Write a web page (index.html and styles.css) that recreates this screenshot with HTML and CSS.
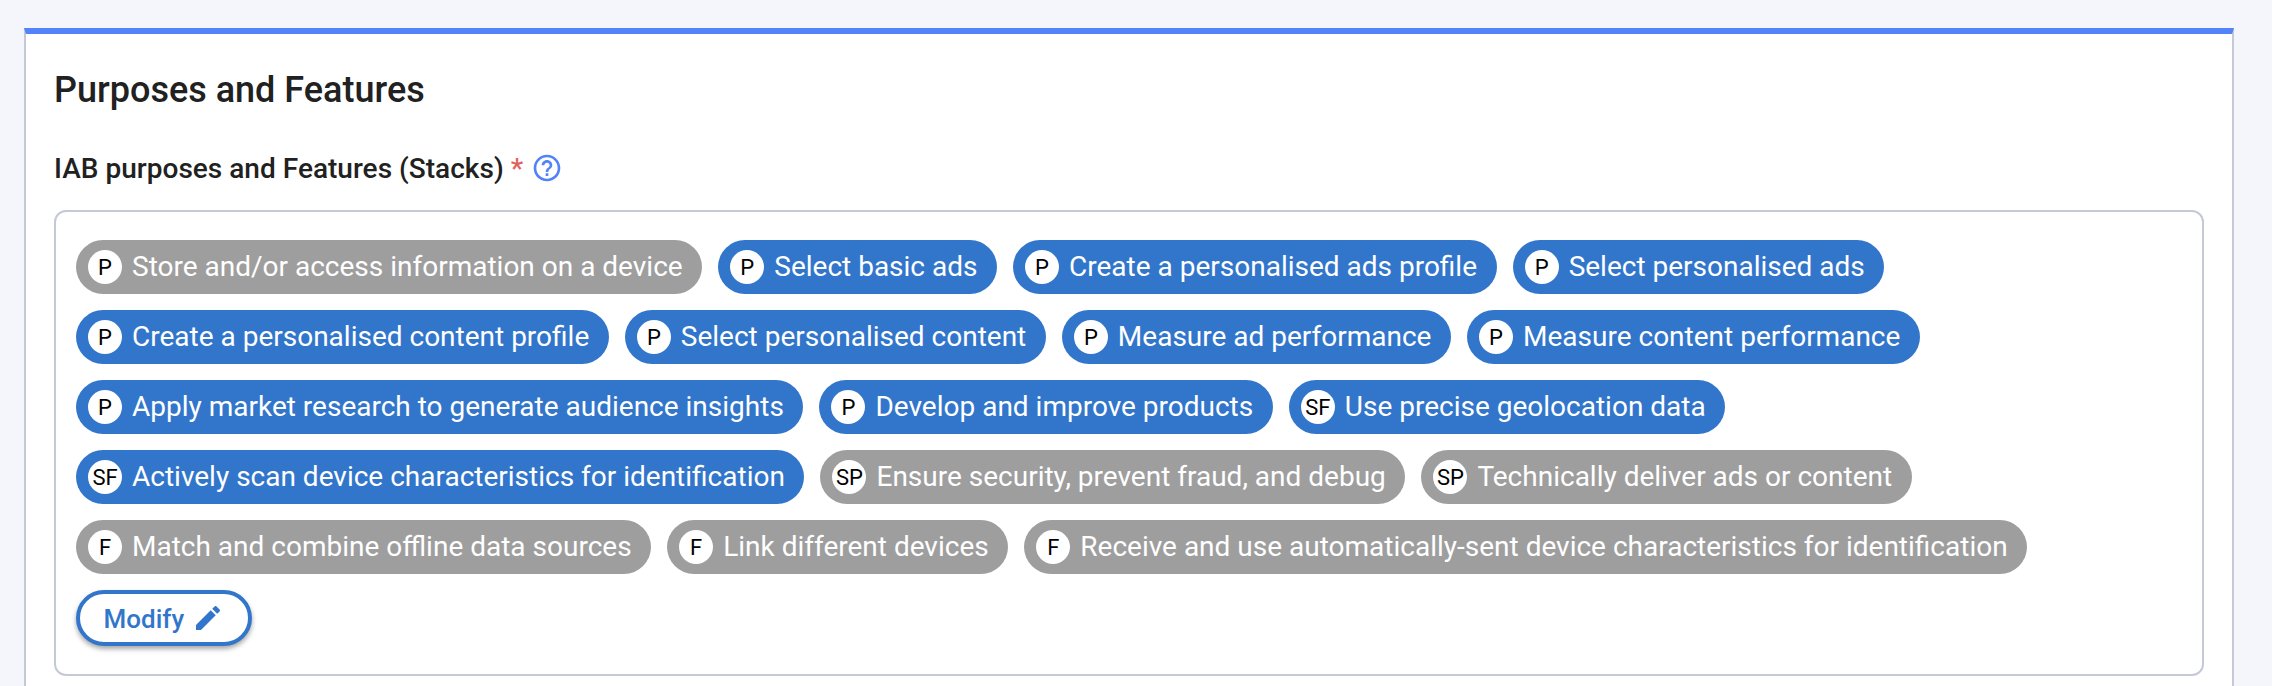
FILE: index.html
```html
<!DOCTYPE html>
<html lang="en">
<head>
<meta charset="utf-8">
<title>Purposes and Features</title>
<link rel="stylesheet" href="styles.css">
</head>
<body>
<main class="card">
  <h1 class="title">Purposes and Features</h1>
  <div class="label">
    <span class="label-text">IAB purposes and Features (Stacks)</span>
    <span class="required">*</span>
    <svg class="help" viewBox="0 0 24 24" fill="currentColor"><path d="M11 18h2v-2h-2v2zm1-16C6.48 2 2 6.480 2 12s4.480 10 10 10 10-4.480 10-10S17.520 2 12 2zm0 18c-4.410 0-8-3.590-8-8s3.590-8 8-8 8 3.590 8 8-3.590 8-8 8zm0-14c-2.210 0-4 1.790-4 4h2c0-1.100.9-2 2-2s2 .9 2 2c0 2-3 1.750-3 5h2c0-2.250 3-2.500 3-5 0-2.210-1.790-4-4-4z"/></svg>
  </div>
  <div class="chips">
    <div class="chip locked"><span class="avatar">P</span><span class="name">Store and/or access information on a device</span></div>
    <div class="chip"><span class="avatar">P</span><span class="name">Select basic ads</span></div>
    <div class="chip"><span class="avatar">P</span><span class="name">Create a personalised ads profile</span></div>
    <div class="chip"><span class="avatar">P</span><span class="name">Select personalised ads</span></div>
    <div class="chip"><span class="avatar">P</span><span class="name">Create a personalised content profile</span></div>
    <div class="chip"><span class="avatar">P</span><span class="name">Select personalised content</span></div>
    <div class="chip"><span class="avatar">P</span><span class="name">Measure ad performance</span></div>
    <div class="chip"><span class="avatar">P</span><span class="name">Measure content performance</span></div>
    <div class="chip"><span class="avatar">P</span><span class="name">Apply market research to generate audience insights</span></div>
    <div class="chip"><span class="avatar">P</span><span class="name">Develop and improve products</span></div>
    <div class="chip"><span class="avatar">SF</span><span class="name">Use precise geolocation data</span></div>
    <div class="chip"><span class="avatar">SF</span><span class="name">Actively scan device characteristics for identification</span></div>
    <div class="chip locked"><span class="avatar">SP</span><span class="name">Ensure security, prevent fraud, and debug</span></div>
    <div class="chip locked"><span class="avatar">SP</span><span class="name">Technically deliver ads or content</span></div>
    <div class="chip locked"><span class="avatar">F</span><span class="name">Match and combine offline data sources</span></div>
    <div class="chip locked"><span class="avatar">F</span><span class="name">Link different devices</span></div>
    <div class="chip locked"><span class="avatar">F</span><span class="name">Receive and use automatically-sent device characteristics for identification</span></div>
    <button class="modify" type="button"><span class="modify-text">Modify</span>
      <svg class="pencil" viewBox="0 0 24 24" fill="currentColor"><path d="M3 17.250V21h3.750L17.810 9.940l-3.750-3.750L3 17.250zM20.710 7.040c.39-.39.39-1.020 0-1.410l-2.340-2.340c-.39-.39-1.020-.39-1.410 0l-1.830 1.830 3.750 3.750 1.830-1.830z"/></svg>
    </button>
  </div>
</main>
</body>
</html>
```
FILE: styles.css
```css
* {
  box-sizing: border-box;
}

body {
  margin: 0;
  height: 686px;
  padding: 28px 38px 0 24px;
  background: #f4f6fb;
  color: #212121;
  font-family: Roboto, "Liberation Sans", sans-serif;
}

.card {
  height: 658px;
  padding: 0 28px;
  background: linear-gradient(#5383f8, #5383f8) top / 100% 6px no-repeat border-box, #fff;
  border: solid #c5c9d6;
  border-width: 6px 2px 0;
  border-top-color: #5383f8;
}

.title {
  margin: 0;
  padding-top: 34px;
  font-size: 36px;
  font-weight: 500;
  line-height: 44px;
}

.label {
  display: flex;
  align-items: center;
  height: 40px;
  margin: 36px 0 22px;
  font-size: 28px;
  font-weight: 500;
}

.label-text {
  letter-spacing: 0.02px;
}

.required {
  margin-left: 7px;
  color: #e35f5f;
}

.help {
  width: 32px;
  height: 32px;
  margin-left: 8px;
  color: #5383f8;
}

.chips {
  display: flex;
  flex-wrap: wrap;
  align-content: flex-start;
  gap: 16px;
  height: 466px;
  padding: 28px 20px;
  border: 2px solid #c5c9d6;
  border-radius: 12px;
}

.chip {
  display: flex;
  align-items: center;
  height: 54px;
  padding: 0 19.6px 0 12px;
  border-radius: 27px;
  background: #3276cb;
  color: #fff;
  font-size: 28px;
  white-space: nowrap;
}

.name {
  padding-bottom: 2px;
}

.chip.locked {
  background: #9e9e9e;
}

.avatar {
  display: flex;
  align-items: center;
  justify-content: center;
  width: 34px;
  height: 34px;
  margin-right: 10px;
  border-radius: 50%;
  background: #fff;
  color: #000;
  font-size: 22px;
}

.modify {
  display: flex;
  align-items: center;
  height: 56px;
  padding: 0 23.5px;
  border: 4px solid #3276cb;
  border-radius: 28px;
  background: #fff;
  box-shadow: 0 3px 5px rgba(0, 0, 0, 0.35);
  color: #3276cb;
  font: 500 26px Roboto, "Liberation Sans", sans-serif;
}

.modify-text {
  padding-top: 2px;
}

.pencil {
  width: 32px;
  height: 32px;
  margin-left: 8px;
}
```
